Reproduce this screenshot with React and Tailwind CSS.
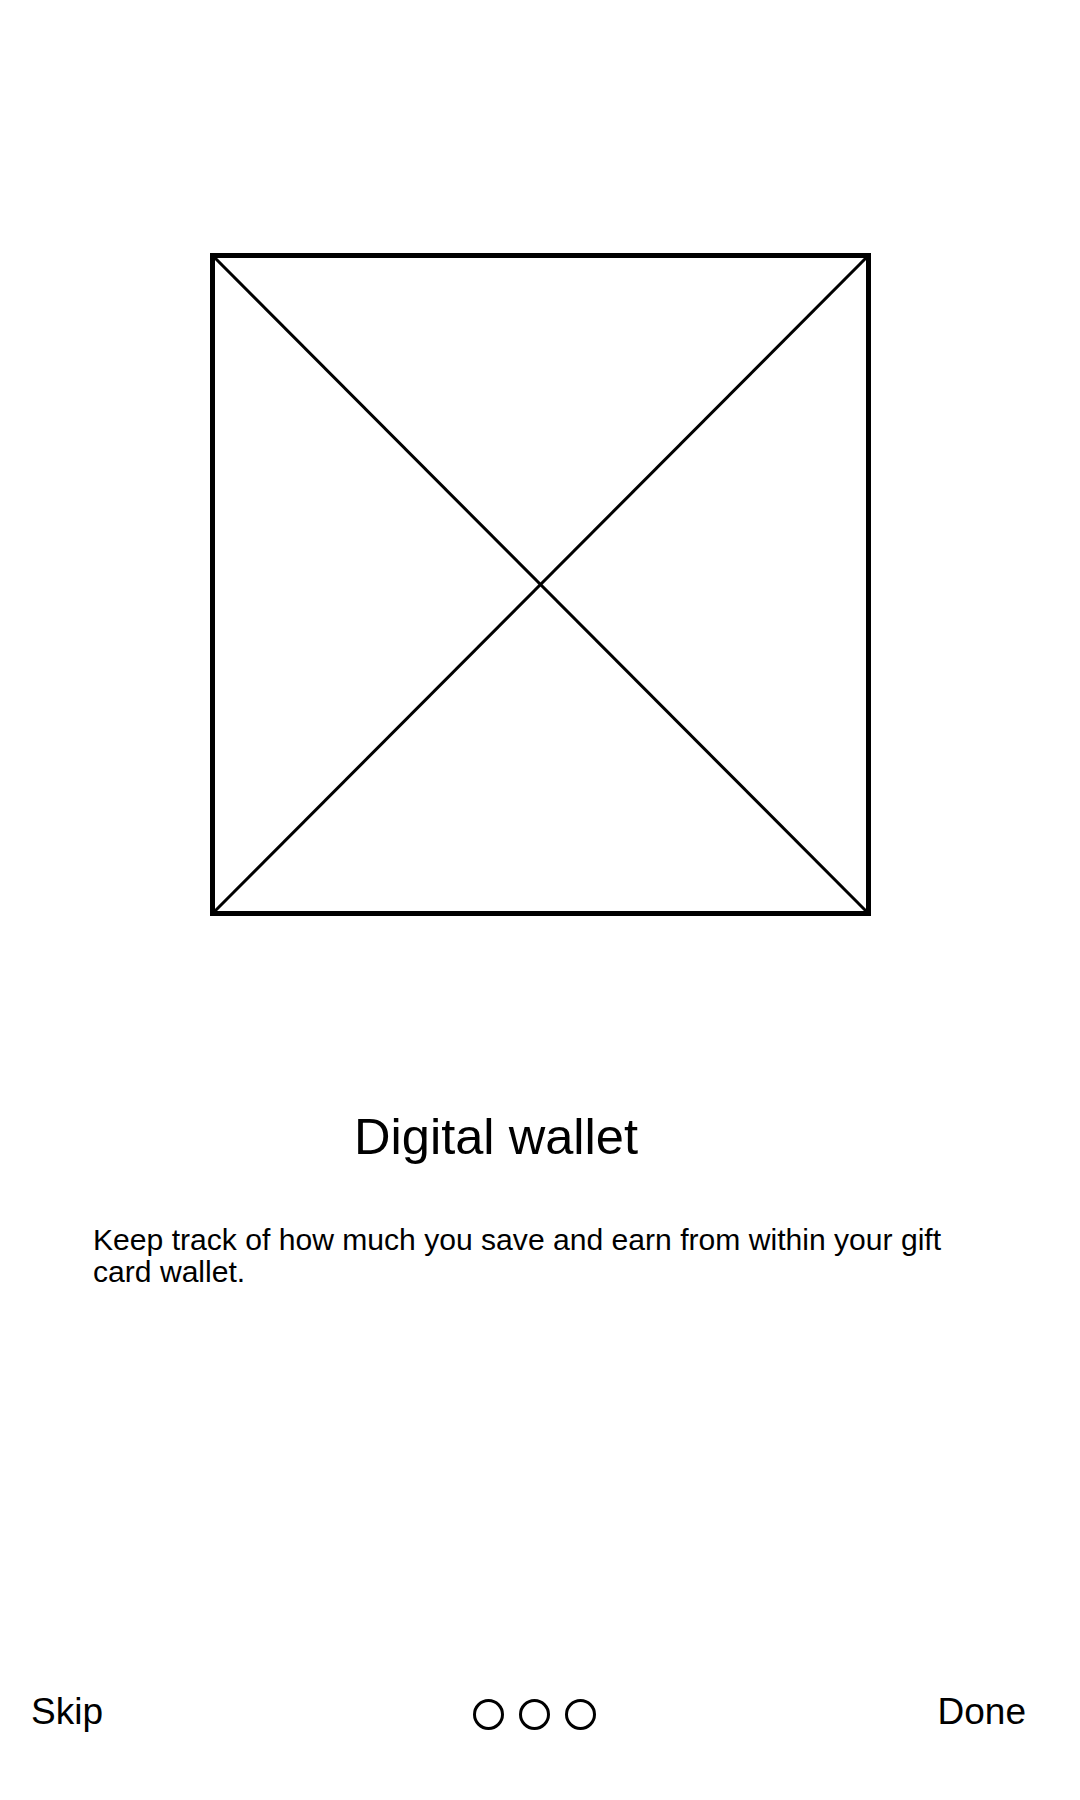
export default function App() {
  const font = { fontFamily: '"Liberation Sans", Arial, sans-serif' };
  return (
    <div className="w-[1080px] h-[1800px] bg-white flex flex-col text-black" style={font}>
      <div className="mt-[253px] mx-auto w-[661px] h-[663px]">
        <svg width="661" height="663" viewBox="0 0 661 663" className="block">
          <rect x="2.5" y="2.5" width="656" height="658" fill="none" stroke="#000" strokeWidth="5" />
          <line x1="2" y1="2" x2="659" y2="661" stroke="#000" strokeWidth="3" />
          <line x1="659" y1="2" x2="2" y2="661" stroke="#000" strokeWidth="3" />
        </svg>
      </div>
      <h1 className="mt-[196px] pl-[354px] text-[50.6px] leading-[50px] font-normal">Digital wallet</h1>
      <p className="mt-[62px] pl-[93px] pr-[93px] text-[30.1px] leading-[32px]">
        Keep track of how much you save and earn from within your gift card wallet.
      </p>
      <div className="mt-auto mb-[70px] h-[36px] flex items-start pl-[31px] pr-[54px]">
        <div className="w-[442px] text-[37px] leading-[36px]">Skip</div>
        <div className="mt-[5px] flex gap-[15px]">
          <div className="w-[31px] h-[31px] rounded-full border-[3px] border-black" />
          <div className="w-[31px] h-[31px] rounded-full border-[3px] border-black" />
          <div className="w-[31px] h-[31px] rounded-full border-[3px] border-black" />
        </div>
        <div className="flex-1 flex justify-end text-[37px] leading-[36px]">Done</div>
      </div>
    </div>
  );
}
